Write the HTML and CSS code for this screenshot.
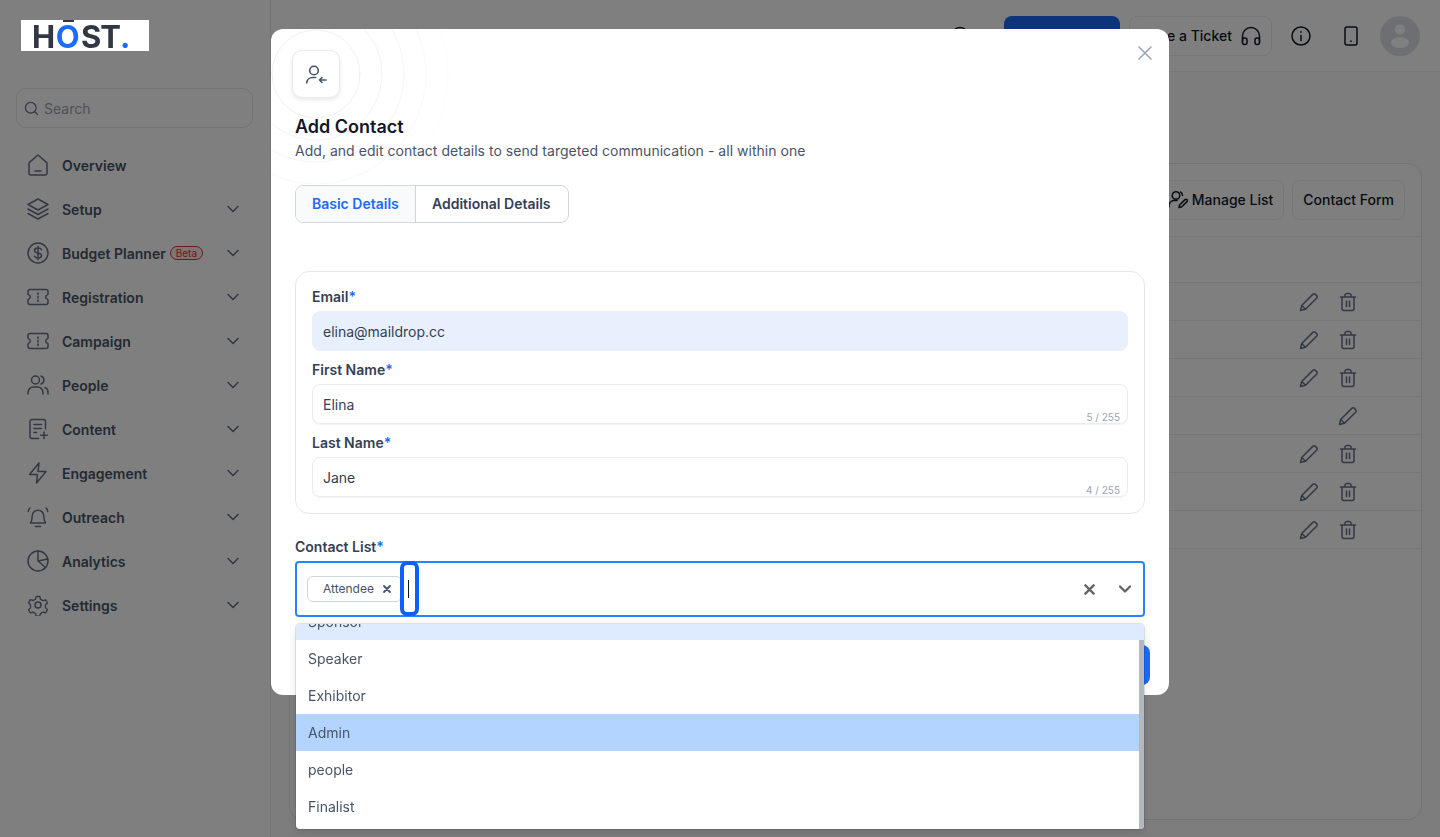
FILE: index.html
```html
<!DOCTYPE html>
<html lang="en">
<head>
<meta charset="utf-8">
<title>Add Contact</title>
<link rel="stylesheet" href="styles.css">
</head>
<body>
<svg class="defs" width="0" height="0">
  <symbol id="chev" viewBox="0 0 12 12"><path d="M1 3.500l5 5 5-5"/></symbol>
  <symbol id="pencil" viewBox="0 0 20 20"><path d="M1.500 18.500l1.200-5L13.800 2.400a1.800 1.800 0 0 1 2.600 0l1.200 1.200a1.800 1.800 0 0 1 0 2.600L6.500 17.300zM2.700 13.500l3.800 3.800"/></symbol>
  <symbol id="trash" viewBox="0 0 20 20"><path d="M2.500 5h15M7 5V3.400A1.900 1.900 0 0 1 8.900 1.500h2.200A1.900 1.900 0 0 1 13 3.400V5M4 5v11.500A2 2 0 0 0 6 18.500h8a2 2 0 0 0 2-2V5M8.500 9v5.500M11.500 9v5.500"/></symbol>
  <symbol id="ticket" viewBox="0 0 22 22"><path d="M3 3.500h16a2 2 0 0 1 2 2v2.500a1 1 0 0 1-.7.900 2.200 2.200 0 0 0 0 4.200 1 1 0 0 1 .7.900v2.500a2 2 0 0 1-2 2H3a2 2 0 0 1-2-2V14a1 1 0 0 1 .7-.9 2.200 2.200 0 0 0 0-4.200A1 1 0 0 1 1 8V5.500a2 2 0 0 1 2-2zM11 7v1.500M11 10.500V12M11 14v1.500"/></symbol>
</svg>

<div class="app">
  <aside class="sidebar">
    <div class="logo"><span class="logo-h">H</span><span class="logo-o logo-mark">O</span><span class="logo-h logo-st">ST</span><span class="logo-o">.</span></div>
    <div class="search">
      <svg class="search-icon" viewBox="0 0 16 16"><circle cx="7.200" cy="7.200" r="5.700"/><path d="M11.500 11.500l3 3"/></svg>
      <span>Search</span>
    </div>
    <nav class="nav">
      <a class="nav-item">
        <svg class="nav-icon" viewBox="0 0 22 22"><path d="M2 9.500a1.500 1.500 0 0 1 .5-1.100L11 1l8.500 7.400a1.500 1.500 0 0 1 .5 1.100V19a2 2 0 0 1-2 2H4a2 2 0 0 1-2-2zM8 17h6"/></svg>
        <span>Overview</span>
      </a>
      <a class="nav-item">
        <svg class="nav-icon" viewBox="0 0 22 22"><path d="M11 1L1 6.500 11 12l10-5.500zM1 11l10 5.500L21 11M1 15.500L11 21l10-5.500"/></svg>
        <span>Setup</span>
        <svg class="chev"><use href="#chev"/></svg>
      </a>
      <a class="nav-item">
        <svg class="nav-icon" viewBox="0 0 22 22"><circle cx="11" cy="11" r="10"/><path d="M14.500 7.800c-.5-1.200-1.800-1.800-3.500-1.800-2 0-3.500 1-3.500 2.500S9 10.500 11 11s3.500 1 3.500 2.500S13 16 11 16c-1.700 0-3-.6-3.500-1.800M11 4.200v13.600"/></svg>
        <span>Budget Planner</span>
        <span class="beta">Beta</span>
        <svg class="chev"><use href="#chev"/></svg>
      </a>
      <a class="nav-item">
        <svg class="nav-icon"><use href="#ticket"/></svg>
        <span>Registration</span>
        <svg class="chev"><use href="#chev"/></svg>
      </a>
      <a class="nav-item">
        <svg class="nav-icon"><use href="#ticket"/></svg>
        <span>Campaign</span>
        <svg class="chev"><use href="#chev"/></svg>
      </a>
      <a class="nav-item">
        <svg class="nav-icon" viewBox="0 0 22 22"><circle cx="8.500" cy="6" r="4"/><path d="M1 20v-1.500A5.500 5.500 0 0 1 6.500 13h4a5.500 5.500 0 0 1 5.500 5.500V20M14 2a4.200 4.200 0 0 1 0 8M18 13.500a5.200 5.200 0 0 1 3 5V20"/></svg>
        <span>People</span>
        <svg class="chev"><use href="#chev"/></svg>
      </a>
      <a class="nav-item">
        <svg class="nav-icon" viewBox="0 0 22 22"><path d="M18.500 11V3.500a2 2 0 0 0-2-2H5a2 2 0 0 0-2 2v15a2 2 0 0 0 2 2h6.500M7 6.500h7.500M7 10.500h7.500M7 14.500h2.500M17 14v6.500M13.800 17.200h6.500"/></svg>
        <span>Content</span>
        <svg class="chev"><use href="#chev"/></svg>
      </a>
      <a class="nav-item">
        <svg class="nav-icon" viewBox="0 0 22 22"><path d="M12 1L2.500 12.500h8l-1 8.500 9.500-11.500h-8z"/></svg>
        <span>Engagement</span>
        <svg class="chev"><use href="#chev"/></svg>
      </a>
      <a class="nav-item">
        <svg class="nav-icon" viewBox="0 0 22 22"><path d="M3.500 17c1-1.500 1.700-3 1.700-7a5.800 5.800 0 0 1 11.600 0c0 4 .7 5.500 1.700 7zM8.500 20.500h5M1.200 5.500c.2-1.500.8-2.600 1.800-3.500M20.800 5.500c-.2-1.500-.8-2.600-1.800-3.500"/></svg>
        <span>Outreach</span>
        <svg class="chev"><use href="#chev"/></svg>
      </a>
      <a class="nav-item">
        <svg class="nav-icon" viewBox="0 0 22 22"><circle cx="11" cy="11" r="10"/><path d="M11 1v10l7.500 6.500M11 11l9.800-2"/></svg>
        <span>Analytics</span>
        <svg class="chev"><use href="#chev"/></svg>
      </a>
      <a class="nav-item">
        <svg class="nav-icon" viewBox="0 0 22 22"><circle cx="11" cy="11" r="3"/><path d="M9 1.500h4l.7 3 2.800 1.600 3-.9 2 3.500-2.200 2.100v3.400l2.200 2.100-2 3.500-3-.9-2.800 1.600-.7 3H9l-.7-3-2.800-1.600-3 .9-2-3.500 2.200-2.100V10.700L.5 8.600l2-3.500 3 .9 2.800-1.600z" transform="translate(1.100 1.100) scale(.9)"/></svg>
        <span>Settings</span>
        <svg class="chev"><use href="#chev"/></svg>
      </a>
    </nav>
  </aside>

  <main class="main">
    <header class="topbar">
      <svg class="top-icon bell" viewBox="0 0 20 20"><circle cx="10" cy="10" r="8.500"/></svg>
      <div class="upgrade"></div>
      <div class="ticket-btn">
        <span>Raise a Ticket</span>
        <svg class="top-icon" viewBox="0 0 20 20"><path d="M1.500 16v-6a8.500 8.500 0 0 1 17 0v6"/><rect x="1.500" y="12" width="4.500" height="6.500" rx="2"/><rect x="14" y="12" width="4.500" height="6.500" rx="2"/></svg>
      </div>
      <svg class="top-icon" viewBox="0 0 20 20"><circle cx="10" cy="10" r="9"/><path d="M10 9.500v5M10 5.800v.4"/></svg>
      <svg class="top-icon top-phone" viewBox="0 0 20 20"><rect x="4" y="1" width="12" height="18" rx="2"/><path d="M10 15v.4"/></svg>
      <div class="avatar">
        <svg viewBox="0 0 40 40"><circle cx="20" cy="13.500" r="5"/><ellipse cx="20" cy="26.500" rx="9" ry="5.500"/></svg>
      </div>
    </header>

    <section class="card">
      <div class="toolbar">
        <div class="tool-btn">
          <svg class="tool-icon" viewBox="0 0 20 20"><circle cx="8" cy="5.500" r="3.800"/><path d="M1 17v-1.500A5 5 0 0 1 6 10.500h3M12.500 2a3.800 3.800 0 0 1 2 3.500M11 17.500l.6-2.500 5.400-5.400a1.400 1.400 0 0 1 2 2L13.500 17z"/></svg>
          <span>Manage List</span>
        </div>
        <div class="tool-btn">Contact Form</div>
      </div>
      <div class="thead"></div>
      <div class="row"><svg class="act"><use href="#pencil"/></svg><svg class="act"><use href="#trash"/></svg></div>
      <div class="row"><svg class="act"><use href="#pencil"/></svg><svg class="act"><use href="#trash"/></svg></div>
      <div class="row"><svg class="act"><use href="#pencil"/></svg><svg class="act"><use href="#trash"/></svg></div>
      <div class="row"><svg class="act"><use href="#pencil"/></svg></div>
      <div class="row"><svg class="act"><use href="#pencil"/></svg><svg class="act"><use href="#trash"/></svg></div>
      <div class="row"><svg class="act"><use href="#pencil"/></svg><svg class="act"><use href="#trash"/></svg></div>
      <div class="row"><svg class="act"><use href="#pencil"/></svg><svg class="act"><use href="#trash"/></svg></div>
    </section>
  </main>
</div>

<div class="overlay">
  <div class="modal">
    <div class="rings">
      <svg viewBox="0 0 200 170" width="200" height="170">
        <defs>
          <radialGradient id="fade" gradientUnits="userSpaceOnUse" cx="45" cy="45" r="150">
            <stop offset="0" stop-color="#e4e7ec"/>
            <stop offset="1" stop-color="#e4e7ec" stop-opacity="0"/>
          </radialGradient>
        </defs>
        <g fill="none" stroke="url(#fade)">
          <circle cx="45" cy="45" r="44"/>
          <circle cx="45" cy="45" r="66"/>
          <circle cx="45" cy="45" r="88"/>
          <circle cx="45" cy="45" r="110"/>
          <circle cx="45" cy="45" r="132"/>
        </g>
      </svg>
    </div>
    <svg class="close" viewBox="0 0 14 14"><path d="M1 1l12 12M13 1L1 13"/></svg>
    <div class="modal-icon">
      <svg viewBox="0 0 22 22"><circle cx="9" cy="7.500" r="4.300"/><path d="M1.700 20v-.5A6 6 0 0 1 7.700 14.500h3M21 17h-6.500M17 14.500L14.500 17l2.500 2.500"/></svg>
    </div>
    <h2 class="modal-title">Add Contact</h2>
    <p class="modal-sub">Add, and edit contact details to send targeted communication - all within one</p>

    <div class="tabs">
      <div class="tab tab-active">Basic Details</div>
      <div class="tab">Additional Details</div>
    </div>

    <div class="form-card">
      <label class="label">Email<em>*</em></label>
      <div class="field field-auto">elina@maildrop.cc</div>
      <label class="label">First Name<em>*</em></label>
      <div class="field">Elina<span class="count">5 / 255</span></div>
      <label class="label">Last Name<em>*</em></label>
      <div class="field">Jane<span class="count">4 / 255</span></div>
    </div>

    <label class="label label-list">Contact List<em>*</em></label>
    <div class="select">
      <div class="tag">
        <span>Attendee</span>
        <svg class="tag-x" viewBox="0 0 10 10"><path d="M2 2l6 6M8 2L2 8"/></svg>
      </div>
      <div class="ring"><i class="caret"></i></div>
      <svg class="clear" viewBox="0 0 12 12"><path d="M1.500 1.500l9 9M10.500 1.500l-9 9"/></svg>
      <svg class="sel-chev" viewBox="0 0 12 8"><path d="M1 1.500l5 5 5-5"/></svg>
      <div class="menu">
        <div class="menu-list">
          <div class="option option-focus">Sponsor</div>
          <div class="option">Speaker</div>
          <div class="option">Exhibitor</div>
          <div class="option option-selected">Admin</div>
          <div class="option">people</div>
          <div class="option">Finalist</div>
        </div>
        <div class="scrollbar"></div>
      </div>
    </div>

    <div class="modal-foot">
      <div class="submit"></div>
    </div>
  </div>
</div>
</body>
</html>
```

FILE: styles.css
```css
* {
    box-sizing: border-box;
}

html, body {
    margin: 0;
    padding: 0;
    height: 100%;
    overflow: hidden;
}

body {
    font-family: "Inter", "Liberation Sans", sans-serif;
    font-size: 14px;
    color: #475467;
    background: #fafafc;
}

.defs {
    position: absolute;
}

svg {
    fill: none;
    stroke: currentColor;
    stroke-linecap: round;
    stroke-linejoin: round;
    display: block;
    flex: none;
}

.app {
    display: flex;
    height: 837px;
}

/* sidebar */
.sidebar {
    width: 271px;
    flex: none;
    background: #fff;
    border-right: 1px solid #e4e7ec;
    padding: 20px 17px 0 16px;
}

.logo {
    position: relative;
    z-index: 20;
    width: 128px;
    height: 31px;
    margin-left: 5px;
    padding-left: 11px;
    background: #fff;
    font-size: 31px;
    font-weight: 700;
    line-height: 33px;
    letter-spacing: .5px;
    white-space: nowrap;
}

.logo-h {
    color: #323843;
}

.logo-o {
    color: #1a6bff;
}

.logo-mark {
    position: relative;
    letter-spacing: 1.5px;
}

.logo-mark::before {
    content: "";
    position: absolute;
    top: 2px;
    left: 7px;
    width: 11px;
    height: 2px;
    background: #323843;
}

.logo-st {
    letter-spacing: -1px;
}

.search {
    display: flex;
    align-items: center;
    gap: 5px;
    height: 40px;
    margin-top: 37px;
    padding: 0 7px;
    border: 1px solid #e4e7ec;
    border-radius: 10px;
    color: #98a2b3;
}

.search-icon {
    width: 15px;
    height: 15px;
    stroke: #667085;
    stroke-width: 1.300;
}

.nav {
    margin-top: 15px;
    margin-right: 14px;
}

.nav-item {
    display: flex;
    align-items: center;
    height: 44px;
    padding-left: 11px;
    font-weight: 600;
    color: #475467;
}

.nav-icon {
    width: 22px;
    height: 22px;
    margin-right: 13px;
    stroke: #667085;
    stroke-width: 1.500;
}

.chev {
    width: 12px;
    height: 12px;
    margin-left: auto;
    stroke: #667085;
    stroke-width: 1.500;
}

.beta {
    height: 14px;
    margin-left: 4px;
    padding: 0 5px;
    border: 1px solid #e0313e;
    border-radius: 7px;
    background: #fdeaea;
    color: #e0313e;
    font-size: 10px;
    font-weight: 400;
    line-height: 12px;
}

/* main page behind the modal */
.main {
    flex: 1;
    min-width: 0;
    background: #fafafc;
}

.topbar {
    display: flex;
    align-items: center;
    justify-content: flex-end;
    height: 72px;
    padding-right: 20px;
    background: #fff;
    border-bottom: 1px solid #eaecf0;
}

.top-icon {
    width: 20px;
    height: 20px;
    margin-left: 19px;
    color: #101828;
    stroke-width: 1.500;
}

.top-phone {
    margin-left: 30px;
}

.bell {
    margin-left: 0;
    margin-right: 34px;
}

.upgrade {
    width: 116px;
    height: 40px;
    border-radius: 8px;
    background: #1a66f5;
}

.ticket-btn {
    display: flex;
    align-items: center;
    width: 143px;
    height: 40px;
    margin-left: 9px;
    padding-left: 9px;
    border: 1px solid #eaecf0;
    border-radius: 8px;
    color: #101828;
    font-weight: 500;
    white-space: nowrap;
}

.ticket-btn .top-icon {
    margin-left: 9px;
}

.avatar {
    width: 40px;
    height: 40px;
    margin-left: 19px;
    border-radius: 50%;
    background: #dcdfe6;
}

.avatar svg {
    width: 40px;
    height: 40px;
    fill: #fff;
    stroke: none;
}

.card {
    height: 657px;
    margin: 91px 18px 0;
    background: #fff;
    border: 1px solid #e4e7ec;
    border-radius: 14px;
}

.toolbar {
    display: flex;
    justify-content: flex-end;
    align-items: center;
    gap: 8px;
    height: 73px;
    padding: 0 16px 1px 0;
    border-bottom: 1px solid #eaecf0;
}

.tool-btn {
    display: flex;
    align-items: center;
    gap: 4px;
    height: 40px;
    padding: 0 10px;
    border: 1px solid #eaecf0;
    border-radius: 8px;
    color: #101828;
    font-weight: 500;
}

.tool-icon {
    width: 20px;
    height: 20px;
    stroke-width: 1.500;
}

.thead {
    height: 46px;
    border-bottom: 1px solid #eaecf0;
}

.row {
    display: flex;
    justify-content: flex-end;
    align-items: center;
    gap: 19px;
    height: 38px;
    padding-right: 63px;
    border-bottom: 1px solid #eaecf0;
}

.act {
    width: 20px;
    height: 20px;
    color: #667085;
    stroke-width: 1.500;
}

/* modal */
.overlay {
    position: fixed;
    inset: 0;
    z-index: 10;
    display: flex;
    justify-content: center;
    align-items: flex-start;
    padding-top: 29px;
    background: rgba(0, 0, 0, .5);
}

.modal {
    position: relative;
    width: 898px;
    padding: 21px 24px 10px;
    background: #fff;
    border-radius: 12px;
}

.rings {
    position: absolute;
    top: 0;
    left: 0;
    width: 200px;
    height: 170px;
    overflow: hidden;
    border-top-left-radius: 12px;
}

.rings svg {
    stroke-width: 1;
}

.close {
    position: absolute;
    top: 17px;
    right: 17px;
    width: 14px;
    height: 14px;
    color: #98a2b3;
    stroke-width: 1.500;
}

.modal-icon {
    position: relative;
    display: flex;
    align-items: center;
    justify-content: center;
    width: 48px;
    height: 48px;
    margin-left: -3px;
    background: #fff;
    border: 1px solid #eaecf0;
    border-radius: 10px;
    box-shadow: 0 2px 4px rgba(16, 24, 40, .1);
    color: #475467;
}

.modal-icon svg {
    width: 22px;
    height: 22px;
    stroke-width: 1.600;
}

.modal-title {
    position: relative;
    margin: 18px 0 0;
    font-size: 18px;
    font-weight: 600;
    line-height: 22px;
    color: #101828;
}

.modal-sub {
    position: relative;
    margin: 3px 0 0;
    font-size: 14px;
    line-height: 20px;
    letter-spacing: .03px;
    color: #475467;
}

.tabs {
    position: relative;
    display: inline-flex;
    height: 38px;
    margin-top: 24px;
    border: 1px solid #d0d5dd;
    border-radius: 8px;
    overflow: hidden;
    font-weight: 600;
    color: #344054;
}

.tab {
    display: flex;
    align-items: center;
    padding: 0 17px 1px 16px;
    white-space: nowrap;
}

.tab-active {
    width: 120px;
    background: #f9fafb;
    border-right: 1px solid #d0d5dd;
    color: #1a6bff;
}

.form-card {
    margin-top: 48px;
    padding: 16px;
    border: 1px solid #e4e7ec;
    border-radius: 14px;
}

.label {
    display: block;
    font-weight: 600;
    line-height: 18px;
    color: #344054;
}

.label em {
    font-style: normal;
    color: #1a6bff;
}

.label-list {
    margin-top: 24px;
}

.field {
    position: relative;
    height: 40px;
    margin: 5px 0 10px;
    padding-left: 10px;
    border: 1px solid #eaecf0;
    border-radius: 8px;
    box-shadow: 0 1px 1px rgba(16, 24, 40, .05);
    color: #344054;
    line-height: 40px;
}

.field:last-child {
    margin-bottom: 0;
}

.field-auto {
    background: #e8f0fe;
    border-color: #e8f0fe;
    box-shadow: none;
}

.count {
    position: absolute;
    right: 7px;
    bottom: 0;
    font-size: 10px;
    line-height: 12px;
    color: #98a2b3;
}

.select {
    position: relative;
    display: flex;
    align-items: center;
    height: 56px;
    margin-top: 5px;
    padding: 0 12px 0 10px;
    border: 2px solid #2684ff;
    border-radius: 4px;
}

.tag {
    display: flex;
    align-items: center;
    flex: none;
    width: 95px;
    height: 26px;
    padding: 0 0 1px 15px;
    border: 1px solid #d0d5dd;
    border-radius: 6px;
    font-size: 12px;
    color: #475467;
}

.tag-x {
    width: 10px;
    height: 10px;
    margin-left: 8px;
    color: #475467;
    stroke-width: 1.800;
}

.ring {
    display: flex;
    align-items: center;
    align-self: stretch;
    flex: none;
    width: 19px;
    margin: -2px 0 -1px -2px;
    padding-left: 4px;
    border: 4px solid #0d5fff;
    border-radius: 7px;
    background: #fff;
}

.caret {
    width: 1px;
    height: 18px;
    background: #101828;
}

.clear {
    width: 11px;
    height: 11px;
    margin-left: auto;
    color: #666;
    stroke-width: 2.600;
}

.sel-chev {
    width: 12px;
    height: 8px;
    margin-left: 24px;
    color: #666;
    stroke-width: 2.400;
}

.menu {
    position: absolute;
    top: 61px;
    left: -1px;
    right: -1px;
    z-index: 5;
    height: 205px;
    overflow: hidden;
    background: #fff;
    border-radius: 4px;
    box-shadow: 0 0 0 1px rgba(0, 0, 0, .1), 0 4px 11px rgba(0, 0, 0, .1);
}

.menu-list {
    margin-top: -21px;
}

.option {
    height: 37px;
    padding-left: 12px;
    line-height: 37px;
    color: #475467;
}

.option-focus {
    background: #deebff;
}

.option-selected {
    background: #b2d4ff;
}

.scrollbar {
    position: absolute;
    top: 16px;
    bottom: 0;
    right: 0;
    width: 5px;
    background: #b4b8bf;
}

.modal-foot {
    display: flex;
    justify-content: flex-end;
    margin: 28px -5px 0 0;
}

.submit {
    width: 110px;
    height: 40px;
    border-radius: 8px;
    background: #1a6bff;
}
```
